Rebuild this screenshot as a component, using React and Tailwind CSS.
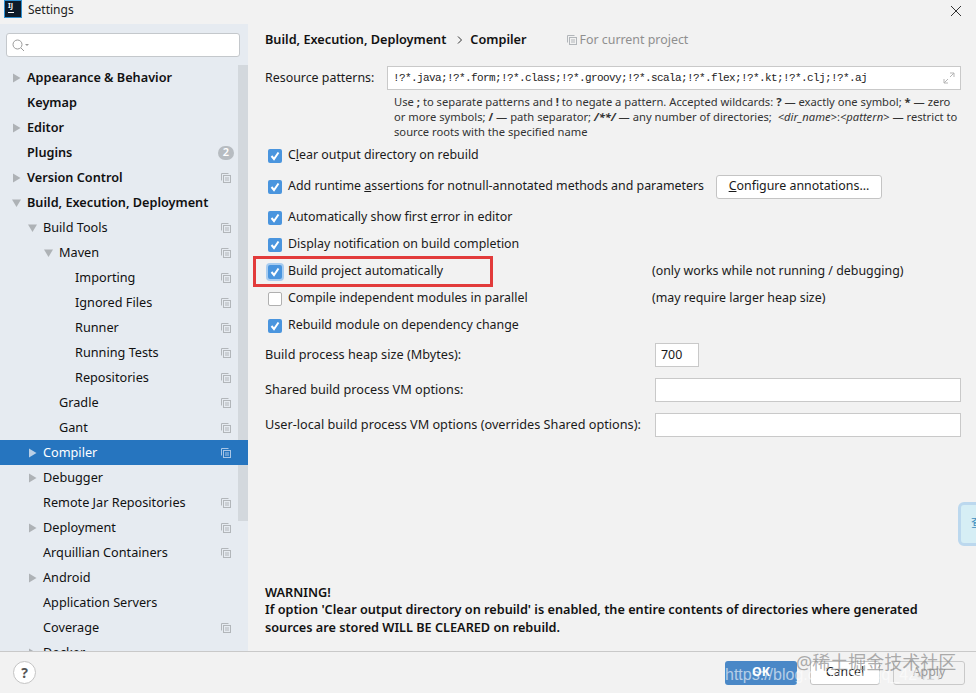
import React from "react";

const font = { fontFamily: '"Noto Sans","Noto Sans CJK SC",sans-serif' };

function Tri({ open, light }) {
  const c = light ? "#b9cfe6" : "#aeb2b6";
  return (
    <svg width="9" height="10" viewBox="0 0 9 10" className="shrink-0">
      {open ? <path d="M0 1.5H9L4.5 9Z" fill={c} /> : <path d="M1 0.5L8.5 5L1 9.5Z" fill={c} />}
    </svg>
  );
}

function Copy({ light, className = "" }) {
  const c = light ? "#a9c6e6" : "#b2b6ba";
  return (
    <svg width="10" height="10" viewBox="0 0 10 10" className={"shrink-0 " + className} fill="none" stroke={c} strokeWidth="1">
      <path d="M0.5 7.5V0.5H7.5" />
      <rect x="2.5" y="2.5" width="7" height="7" />
      <path d="M4 5H8M4 7H8" />
    </svg>
  );
}

const rows = [
  { t: "Appearance & Behavior", b: 1, d: 0, a: "c" },
  { t: "Keymap", b: 1, d: 0 },
  { t: "Editor", b: 1, d: 0, a: "c" },
  { t: "Plugins", b: 1, d: 0, badge: 1 },
  { t: "Version Control", b: 1, d: 0, a: "c", c: 1 },
  { t: "Build, Execution, Deployment", b: 1, d: 0, a: "o" },
  { t: "Build Tools", d: 1, a: "o", c: 1 },
  { t: "Maven", d: 2, a: "o", c: 1 },
  { t: "Importing", d: 3, c: 1 },
  { t: "Ignored Files", d: 3, c: 1 },
  { t: "Runner", d: 3, c: 1 },
  { t: "Running Tests", d: 3, c: 1 },
  { t: "Repositories", d: 3, c: 1 },
  { t: "Gradle", d: 2, c: 1 },
  { t: "Gant", d: 2, c: 1 },
  { t: "Compiler", d: 1, a: "c", c: 1, s: 1 },
  { t: "Debugger", d: 1, a: "c" },
  { t: "Remote Jar Repositories", d: 1, c: 1 },
  { t: "Deployment", d: 1, a: "c", c: 1 },
  { t: "Arquillian Containers", d: 1, c: 1 },
  { t: "Android", d: 1, a: "c" },
  { t: "Application Servers", d: 1 },
  { t: "Coverage", d: 1, c: 1 },
  { t: "Docker", d: 1, a: "c" },
];

const pad = ["pl-[27px]", "pl-[43px]", "pl-[59px]", "pl-[75px]"];
const arrowPos = ["left-[12px]", "left-[28px]", "left-[44px]", "left-[60px]"];

function Row({ r }) {
  return (
    <div className={`relative flex h-[25px] shrink-0 items-center pr-[17px] text-[12.7px] ${pad[r.d]} ${r.s ? "z-10 bg-[#2675bf] text-white" : "text-[#111]"} ${r.b ? "font-semibold" : ""}`}>
      {r.a && (
        <span className={`absolute top-[8px] ${arrowPos[r.d]}`}>
          <Tri open={r.a === "o"} light={r.s} />
        </span>
      )}
      <span className="flex-1 whitespace-nowrap">{r.t}</span>
      {r.c && <Copy light={r.s} />}
      {r.badge && (
        <span className="mr-[-3px] flex h-[14px] w-[16px] items-center justify-center rounded-full bg-[#b7bcc1] text-[11px] text-white">2</span>
      )}
    </div>
  );
}

function Check({ on, focus }) {
  return (
    <span className={`flex h-[14px] w-[14px] shrink-0 items-center justify-center rounded-[2px] ${on ? "bg-[#4a95de]" : "border border-[#b0b0b0] bg-white"} ${focus ? "shadow-[0_0_0_2px_#a9cdf0]" : ""}`}>
      {on && (
        <svg width="10" height="10" viewBox="0 0 10 10" fill="none" stroke="white" strokeWidth="2">
          <path d="M1.5 5L4 8L8.5 1.5" />
        </svg>
      )}
    </span>
  );
}

function CheckRow({ on, label, focus, children, note, h = "h-[27px]" }) {
  return (
    <div className={`flex items-center ${h}`}>
      <span className="ml-[3px] flex w-[20px]"><Check on={on} focus={focus} /></span>
      <span className={`whitespace-nowrap ${note ? "w-[364px]" : ""}`}>{label}</span>
      {note && <span className="whitespace-nowrap">{note}</span>}
      {children}
    </div>
  );
}

export default function App() {
  return (
    <div style={font} className="relative flex h-[693px] w-[976px] flex-col overflow-hidden bg-[#f2f2f2] text-[12.4px] text-[#1a1a1a]">
      <div className="flex h-[24px] shrink-0 items-center pl-[5px] pb-[6px]">
        <span className="flex h-[16px] w-[16px] flex-col items-start bg-[#0d1b2a] pl-[3px] pt-[1px] text-[7px] font-bold leading-[8px] text-white outline outline-1 outline-[#2f8fd0]">
          IJ
          <span className="mt-[2px] h-[1px] w-[6px] bg-white" />
        </span>
        <span className="ml-[7px] mt-[2px] text-[12px] text-[#222]">Settings</span>
        <svg width="12" height="12" viewBox="0 0 12 12" className="ml-auto mr-[14px] mt-[3px]" stroke="#333" fill="none">
          <path d="M1 1L11 11M11 1L1 11" />
        </svg>
      </div>

      <div className="flex min-h-0 flex-1">
        <div className="flex w-[248px] shrink-0 flex-col overflow-hidden bg-[#e6ebf1]">
          <div className="px-[6px] pt-[9px] pb-[8px]">
            <div className="flex h-[24px] w-[234px] items-center rounded-[3px] border border-[#c4c8cc] bg-white pl-[5px]">
              <svg width="17" height="13" viewBox="0 0 17 13" fill="none" stroke="#9a9a9a">
                <circle cx="5.5" cy="5.5" r="4.5" />
                <path d="M9 9L12 12" />
                <path d="M13 5H17L15 7Z" fill="#9a9a9a" stroke="none" />
              </svg>
            </div>
          </div>
          <div className="relative flex min-h-0 flex-1 flex-col overflow-hidden">
            {rows.map((r) => <Row key={r.t} r={r} />)}
            <div className="absolute right-0 top-0 h-[456px] w-[10px] bg-[#ced3d8]/80" />
          </div>
        </div>

        <div className="flex min-w-0 flex-1 flex-col pl-[17px] pr-[15px]">
          <div className="flex h-[32px] shrink-0 items-center whitespace-nowrap">
            <span className="text-[12.7px] font-semibold text-[#111]">Build, Execution, Deployment</span>
            <svg width="6" height="8" viewBox="0 0 6 8" className="ml-[11px] mr-[7px]" fill="none" stroke="#333"><path d="M1 0.5L4.5 4L1 7.5" /></svg>
            <span className="text-[12.7px] font-semibold text-[#111]">Compiler</span>
            <Copy className="ml-[40px] mr-[3px]" />
            <span className="text-[#8f8f8f]">For current project</span>
          </div>

          <div className="mt-[10px] flex h-[24px] shrink-0 items-center">
            <span className="w-[122px] shrink-0 whitespace-nowrap">Resource patterns:</span>
            <div className="flex h-[24px] flex-1 items-center justify-between border border-[#c9c9c9] bg-white pl-[5px] pr-[5px] text-[11px] tracking-[-0.6px] text-[#222]" style={{ fontFamily: '"Liberation Mono",monospace' }}>
              <span className="whitespace-nowrap">!?*.java;!?*.form;!?*.class;!?*.groovy;!?*.scala;!?*.flex;!?*.kt;!?*.clj;!?*.aj</span>
              <svg width="12" height="12" viewBox="0 0 12 12" fill="none" stroke="#b5b5b5"><path d="M7 1H11V5M11 1L7 5M5 11H1V7M1 11L5 7" /></svg>
            </div>
          </div>

          <div className="ml-[129px] mt-[4px] whitespace-nowrap text-[11.2px] leading-[15px] text-[#333]">
            <div>Use <b>;</b> to separate patterns and <b>!</b> to negate a pattern. Accepted wildcards: <b>?</b> — exactly one symbol; <b>*</b> — zero</div>
            <div>or more symbols; <b>/</b> — path separator; <b><i>/**/</i></b> — any number of directories; &nbsp;<i>&lt;dir_name&gt;</i>:<i>&lt;pattern&gt;</i> — restrict to</div>
            <div>source roots with the specified name</div>
          </div>

          <div className="mt-[-1px] flex flex-col">
            <CheckRow on label={<>C<u>l</u>ear output directory on rebuild</>} h="h-[35px]" />
            <CheckRow on label={<>Add runtime <u>a</u>ssertions for notnull-annotated methods and parameters</>} h="h-[27px]">
              <button className="ml-[12px] h-[24px] w-[166px] rounded-[3px] border border-[#c4c4c4] bg-white text-[12.4px]"><u>C</u>onfigure annotations...</button>
            </CheckRow>
            <CheckRow on label={<>Automatically show first <u>e</u>rror in editor</>} h="h-[35px]" />
            <CheckRow on label="Display notification on build completion" h="h-[19px]" />
            <CheckRow on focus label="Build project automatically" note="(only works while not running / debugging)" h="h-[35px]" />
            <CheckRow label="Compile independent modules in parallel" note="(may require larger heap size)" h="h-[19px]" />
            <CheckRow on label="Rebuild module on dependency change" h="h-[35px]" />
          </div>

          <div className="mt-[0px] flex h-[24px] items-center">
            <span className="w-[390px] shrink-0 text-[12.7px]">Build process heap size (Mbytes):</span>
            <span className="flex h-[24px] w-[44px] items-center border border-[#c9c9c9] bg-white pl-[5px]">700</span>
          </div>
          <div className="mt-[11px] flex h-[24px] items-center">
            <span className="w-[390px] shrink-0 text-[12.7px]">Shared build process VM options:</span>
            <span className="h-[24px] flex-1 border border-[#c9c9c9] bg-white" />
          </div>
          <div className="mt-[11px] flex h-[24px] items-center">
            <span className="w-[390px] shrink-0 whitespace-nowrap text-[12.7px]">User-local build process VM options (overrides Shared options):</span>
            <span className="h-[24px] flex-1 border border-[#c9c9c9] bg-white" />
          </div>

          <div className="mt-auto mb-[15px] whitespace-nowrap text-[12.7px] font-semibold leading-[17.5px] text-[#111]">
            <div>WARNING!</div>
            <div>If option 'Clear output directory on rebuild' is enabled, the entire contents of directories where generated</div>
            <div>sources are stored WILL BE CLEARED on rebuild.</div>
          </div>
        </div>
      </div>

      <div className="flex h-[42px] shrink-0 items-center border-t border-[#c9c9c9] pl-[13px] pr-[11px]">
        <span className="flex h-[23px] w-[23px] items-center justify-center rounded-full border border-[#c4c4c4] bg-white text-[14px] font-bold text-[#555]">?</span>
        <div className="ml-auto flex gap-[13px]">
          <button className="h-[24px] w-[72px] rounded-[3px] bg-[#4a88c7] text-[12.4px] font-bold text-white">OK</button>
          <button className="h-[24px] w-[70px] rounded-[3px] border border-[#c4c4c4] bg-white text-[12.4px]">Cancel</button>
          <button className="h-[24px] w-[72px] rounded-[3px] border border-[#c9c9c9] text-[12.4px] text-[#9a9a9a]">Apply</button>
        </div>
      </div>

      <div className="absolute left-[253px] top-[256px] h-[31px] w-[240px] border-[3px] border-[#e23b3b]" />
      <div className="absolute left-[958px] top-[502px] h-[44px] w-[30px] rounded-[6px] border-[3px] border-[#bcd8ee] bg-[#d6eef5] pl-[10px] text-[12px] leading-[36px] text-[#3d8fc0]">查</div>
      <div className="absolute left-[725px] top-[664px] whitespace-nowrap text-[16px] leading-[22px] text-white/60" style={{ fontFamily: '"Liberation Sans",sans-serif' }}>https://blog.csdn.net/qq_42<span className="text-[#999]/30">417</span></div>
      <div className="absolute left-[796px] top-[650px] whitespace-nowrap text-[18px] leading-[24px] text-[#8a8a8a]/70">@稀土掘金技术社区</div>
    </div>
  );
}
